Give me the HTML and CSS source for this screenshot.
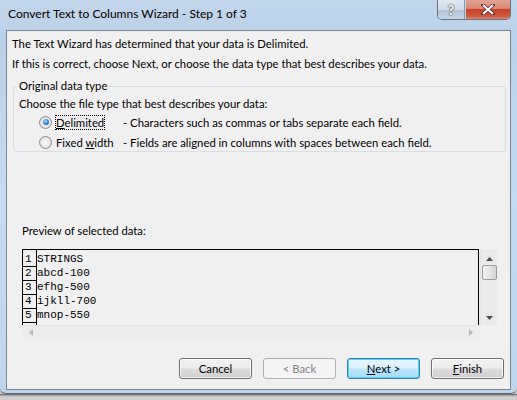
FILE: index.html
```html
<!DOCTYPE html>
<html>
<head>
<meta charset="utf-8">
<link rel="stylesheet" href="styles.css">
</head>
<body>
<div class="window">
  <div class="titlebar">
    <span class="title">Convert Text to Columns Wizard - Step 1 of 3</span>
    <div class="caption-buttons">
      <div class="cap help">?</div>
      <div class="cap close">
        <svg width="14" height="11" viewBox="0 0 14 11"><path d="M2 1 L12 10 M12 1 L2 10" stroke="#4a2a28" stroke-width="3.4" stroke-linecap="square"/><path d="M2 1 L12 10 M12 1 L2 10" stroke="#ffffff" stroke-width="2"/></svg>
      </div>
    </div>
  </div>
  <div class="client">
    <p class="line first">The Text Wizard has determined that your data is Delimited.</p>
    <p class="line">If this is correct, choose Next, or choose the data type that best describes your data.</p>
    <fieldset class="group">
      <legend>Original data type</legend>
      <p class="choose">Choose the file type that best describes your data:</p>
      <div class="radio-row firstrow">
        <span class="radio checked"></span>
        <span class="rlabel"><span class="focus"><u>D</u>elimited</span></span>
        <span class="rdesc">- Characters such as commas or tabs separate each field.</span>
      </div>
      <div class="radio-row">
        <span class="radio"></span>
        <span class="rlabel">Fixed <u>w</u>idth</span>
        <span class="rdesc">- Fields are aligned in columns with spaces between each field.</span>
      </div>
    </fieldset>
    <p class="preview-label">Preview of selected data:</p>
    <div class="preview">
      <div class="preview-main">
        <div class="data">
          <div class="nums">
            <span>1</span><span>2</span><span>3</span><span>4</span><span>5</span>
          </div>
          <div class="rows">
            <span>STRINGS</span><span>abcd-100</span><span>efhg-500</span><span>ijkll-700</span><span>mnop-550</span>
          </div>
        </div>
        <div class="vscroll">
          <svg width="7" height="4" viewBox="0 0 7 4"><path d="M0 4 L3.5 0 L7 4Z" fill="#4d4d4d"/></svg>
          <div class="thumb"></div>
          <div class="vspace"></div>
          <svg width="7" height="4" viewBox="0 0 7 4"><path d="M0 0 L3.5 4 L7 0Z" fill="#4d4d4d"/></svg>
        </div>
      </div>
      <div class="hscroll">
        <svg width="4" height="7" viewBox="0 0 4 7"><path d="M4 0 L0 3.5 L4 7Z" fill="#b8b8b8"/></svg>
        <svg width="4" height="7" viewBox="0 0 4 7"><path d="M0 0 L4 3.5 L0 7Z" fill="#b8b8b8"/></svg>
      </div>
    </div>
    <div class="buttons">
      <div class="btn">Cancel</div>
      <div class="btn disabled">&lt; Back</div>
      <div class="btn default"><u>N</u>ext &gt;</div>
      <div class="btn"><u>F</u>inish</div>
    </div>
  </div>
</div>
<div class="below"></div>
</body>
</html>
```
FILE: styles.css
```css
* { box-sizing: border-box; }
html, body { margin: 0; padding: 0; }
body {
  width: 517px;
  height: 400px;
  overflow: hidden;
  background: #c8c8c8;
  font-family: Lato, "Liberation Sans", sans-serif;
  font-size: 11.3px;
  color: #000;
}
.window {
  width: 517px;
  height: 394px;
  background: linear-gradient(180deg, #c3d6ea 0%, #b9d1ea 10%, #c6dbf1 50%, #bed5ee 100%);
  border-bottom: 1px solid #5b6570;
  border-radius: 0 0 6px 6px;
  display: flex;
  flex-direction: column;
}
.titlebar {
  height: 30px;
  display: flex;
  align-items: flex-start;
  justify-content: space-between;
  padding-left: 8px;
  padding-right: 6px;
  flex-shrink: 0;
}
.title {
  margin-top: 6px;
  font-size: 12px;
  color: #000;
}
.caption-buttons {
  display: flex;
  gap: 1px;
  border: 1px solid #6a7584;
  border-top: none;
  border-radius: 0 0 5px 5px;
  overflow: hidden;
  height: 20px;
}
.cap {
  height: 19px;
  display: flex;
  align-items: center;
  justify-content: center;
}
.help {
  width: 27px;
  background: linear-gradient(180deg, #e0e8f1 0%, #cfdbe8 50%, #b2c2d4 51%, #c8d6e4 100%);
  color: #fff;
  font-weight: bold;
  font-size: 14px;
  text-shadow: 0 0 2px #333, 0 0 1px #333;
  border-right: 1px solid #8a98a8;
}
.close {
  width: 44px;
  background: linear-gradient(180deg, #e2a494 0%, #d98670 45%, #c8412a 50%, #cf5a3f 85%, #df8a6e 100%);
}
.client {
  margin: 0 6px;
  height: 360px;
  background: #f0f0f0;
  border: 1px solid #7a8592;
  display: flex;
  flex-direction: column;
  padding: 0 5px 0 5px;
}
.line {
  margin: 0;
  height: 20px;
  line-height: 20px;
}
.line.first { margin-top: 3px; }
.group {
  margin: 5px 0 0 1px;
  padding: 0 5px 0 5px;
  width: 493px;
  height: 73px;
  border: 1px solid #d5dfe5;
  border-radius: 3px;
}
.group legend {
  padding: 0 1px;
  margin-left: -1px;
  line-height: 14px;
}
.choose {
  margin: 4px 0 0 0;
  line-height: 14px;
}
.radio-row {
  display: flex;
  align-items: center;
  height: 20px;
  padding-left: 20px;
}
.radio-row.firstrow { margin-top: 1px; }
.radio {
  width: 13px;
  height: 13px;
  border-radius: 50%;
  border: 1px solid #8a8a8a;
  background: radial-gradient(circle at 50% 50%, #ffffff 0%, #e6e6e6 60%, #cfcfcf 100%);
  position: relative;
  flex-shrink: 0;
}
.radio.checked::after {
  content: "";
  position: absolute;
  left: 2.5px;
  top: 2.5px;
  width: 6px;
  height: 6px;
  border-radius: 50%;
  background: radial-gradient(circle at 40% 35%, #a9dcff 0%, #2e7fd0 55%, #0f3c7c 100%);
}
.rlabel {
  margin-left: 4px;
  width: 67px;
  flex-shrink: 0;
}
.focus {
  outline: 1px dotted #000;
  outline-offset: 0px;
}
.preview-label {
  margin: 0;
  padding-left: 10px;
  margin-top: 71px;
  line-height: 16px;
}
.preview {
  margin: 10px 0 0 10px;
  width: 475px;
  display: flex;
  flex-direction: column;
}
.preview-main {
  display: flex;
  height: 76px;
}
.data {
  width: 458px;
  border: 1px solid #000;
  border-bottom: none;
  display: flex;
  font-family: "Liberation Mono", monospace;
  font-size: 11px;
  overflow: hidden;
}
.nums {
  width: 14px;
  border-right: 1px solid #000;
  display: flex;
  flex-direction: column;
  padding-top: 3px;
}
.nums span {
  height: 14px;
  line-height: 13px;
  border-bottom: 1px solid #000;
  padding-left: 2px;
}
.rows {
  display: flex;
  flex-direction: column;
  padding-top: 3px;
}
.rows span {
  height: 14px;
  line-height: 13px;
}
.vscroll {
  width: 17px;
  margin-left: 1px;
  background: #eaeaea;
  border-left: 1px dotted #e0e0e0;
  display: flex;
  flex-direction: column;
  align-items: center;
  padding: 8px 0 5px 0;
}
.thumb {
  margin-top: 4px;
  width: 15px;
  height: 15px;
  border: 1px solid #9a9a9a;
  border-radius: 2px;
  background: linear-gradient(90deg, #f3f3f3 0%, #e6e6e6 50%, #d4d4d4 100%);
}
.vspace { flex: 1; }
.hscroll {
  height: 14px;
  width: 458px;
  background: #ececec;
  border-top: 1px dotted #dcdcdc;
  display: flex;
  justify-content: space-between;
  align-items: center;
  padding: 0 7px 0 7px;
}
.buttons {
  display: flex;
  justify-content: flex-end;
  gap: 11px;
  margin-top: 19px;
  padding-right: 1px;
}
.btn {
  width: 73px;
  height: 21px;
  border: 1px solid #707070;
  border-radius: 3px;
  background: linear-gradient(180deg, #f2f2f2 0%, #ebebeb 48%, #dddddd 52%, #cfcfcf 100%);
  box-shadow: inset 0 0 0 1px rgba(255,255,255,0.7);
  display: flex;
  align-items: center;
  justify-content: center;
  line-height: 1;
}
.btn.disabled {
  border-color: #adb2b5;
  background: #f4f4f4;
  color: #838383;
  box-shadow: none;
}
.btn.default {
  border-color: #3c7fb1;
  box-shadow: inset 0 0 0 1px #48d8fb;
  background: linear-gradient(180deg, #eaf6fd 0%, #d9f0fc 48%, #bee6fd 52%, #a7d9f5 100%);
}
.below {
  height: 6px;
  background: linear-gradient(180deg, #4d4d4d 0px, #9a9a9a 1px, #d0d0d0 3px);
}
```
